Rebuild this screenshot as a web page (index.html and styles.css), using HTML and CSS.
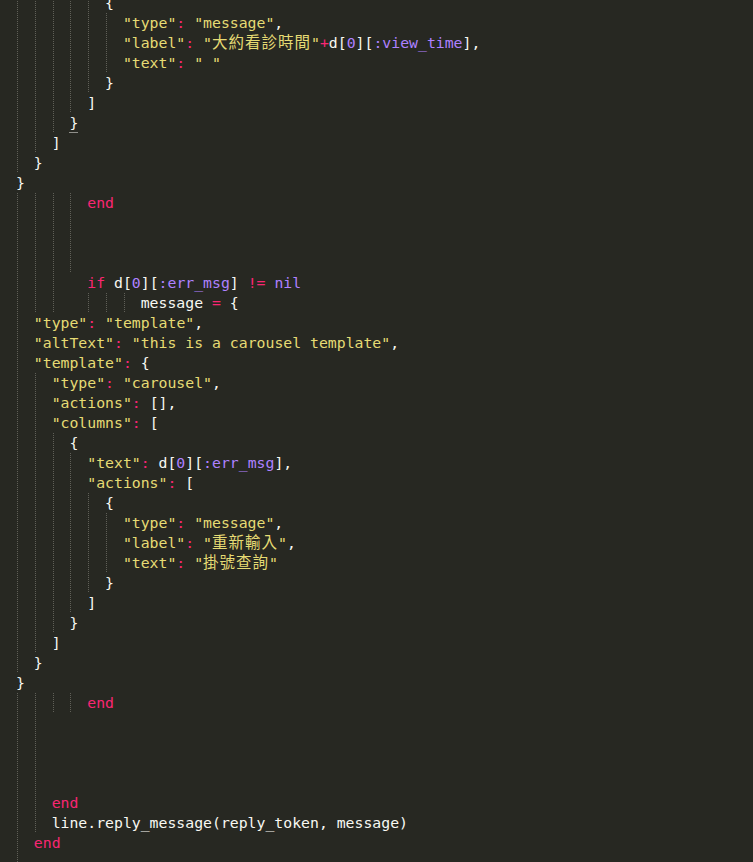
FILE: index.html
```html
<!DOCTYPE html>
<html>
	<head>
		<meta charset="utf-8">
		<title>reply.rb</title>
	<link rel="stylesheet" href="styles.css">
	</head>
	<body>
	<div class="editor">
		<div class="ln"><i class="g"></i><i class="g"></i><i class="g"></i><i class="g"></i><i class="g"></i><span class="t">{</span></div>
		<div class="ln"><i class="g"></i><i class="g"></i><i class="g"></i><i class="g"></i><i class="g"></i><i class="g"></i><span class="t"><b class="s">"type"</b><b class="k">:</b> <b class="s">"message"</b>,</span></div>
		<div class="ln"><i class="g"></i><i class="g"></i><i class="g"></i><i class="g"></i><i class="g"></i><i class="g"></i><span class="t"><b class="s">"label"</b><b class="k">:</b> <b class="s">"<b class="cjk">大約看診時間</b>"</b><b class="k">+</b>d[<b class="c">0</b>][<b class="c">:view_time</b>],</span></div>
		<div class="ln"><i class="g"></i><i class="g"></i><i class="g"></i><i class="g"></i><i class="g"></i><i class="g"></i><span class="t"><b class="s">"text"</b><b class="k">:</b> <b class="s">" "</b></span></div>
		<div class="ln"><i class="g"></i><i class="g"></i><i class="g"></i><i class="g"></i><i class="g"></i><span class="t">}</span></div>
		<div class="ln"><i class="g"></i><i class="g"></i><i class="g"></i><i class="g"></i><span class="t">]</span></div>
		<div class="ln"><i class="g"></i><i class="g"></i><i class="g"></i><span class="t"><b class="match">}</b></span></div>
		<div class="ln"><i class="g"></i><i class="g"></i><span class="t">]</span></div>
		<div class="ln"><i class="g"></i><span class="t">}</span></div>
		<div class="ln"><span class="t">}</span></div>
		<div class="ln"><i class="g"></i><i class="g"></i><i class="g"></i><i class="g"></i><span class="t"><b class="k">end</b></span></div>
		<div class="ln"><i class="g"></i><i class="g"></i><i class="g"></i><i class="g"></i></div>
		<div class="ln"><i class="g"></i><i class="g"></i><i class="g"></i><i class="g"></i></div>
		<div class="ln"><i class="g"></i><i class="g"></i><i class="g"></i><i class="g"></i></div>
		<div class="ln"><i class="g"></i><i class="g"></i><i class="g"></i><i class="e"></i><span class="t"><b class="k">if</b> d[<b class="c">0</b>][<b class="c">:err_msg</b>] <b class="k">!=</b> <b class="c">nil</b></span></div>
		<div class="ln"><i class="g"></i><i class="g"></i><i class="g"></i><i class="e"></i><i class="g"></i><i class="g"></i><i class="g"></i><span class="t">message <b class="k">=</b> {</span></div>
		<div class="ln"><i class="g"></i><span class="t"><b class="s">"type"</b><b class="k">:</b> <b class="s">"template"</b>,</span></div>
		<div class="ln"><i class="g"></i><span class="t"><b class="s">"altText"</b><b class="k">:</b> <b class="s">"this is a carousel template"</b>,</span></div>
		<div class="ln"><i class="g"></i><span class="t"><b class="s">"template"</b><b class="k">:</b> {</span></div>
		<div class="ln"><i class="g"></i><i class="g"></i><span class="t"><b class="s">"type"</b><b class="k">:</b> <b class="s">"carousel"</b>,</span></div>
		<div class="ln"><i class="g"></i><i class="g"></i><span class="t"><b class="s">"actions"</b><b class="k">:</b> [],</span></div>
		<div class="ln"><i class="g"></i><i class="g"></i><span class="t"><b class="s">"columns"</b><b class="k">:</b> [</span></div>
		<div class="ln"><i class="g"></i><i class="g"></i><i class="g"></i><span class="t">{</span></div>
		<div class="ln"><i class="g"></i><i class="g"></i><i class="g"></i><i class="g"></i><span class="t"><b class="s">"text"</b><b class="k">:</b> d[<b class="c">0</b>][<b class="c">:err_msg</b>],</span></div>
		<div class="ln"><i class="g"></i><i class="g"></i><i class="g"></i><i class="g"></i><span class="t"><b class="s">"actions"</b><b class="k">:</b> [</span></div>
		<div class="ln"><i class="g"></i><i class="g"></i><i class="g"></i><i class="g"></i><i class="g"></i><span class="t">{</span></div>
		<div class="ln"><i class="g"></i><i class="g"></i><i class="g"></i><i class="g"></i><i class="g"></i><i class="g"></i><span class="t"><b class="s">"type"</b><b class="k">:</b> <b class="s">"message"</b>,</span></div>
		<div class="ln"><i class="g"></i><i class="g"></i><i class="g"></i><i class="g"></i><i class="g"></i><i class="g"></i><span class="t"><b class="s">"label"</b><b class="k">:</b> <b class="s">"<b class="cjk">重新輸入</b>"</b>,</span></div>
		<div class="ln"><i class="g"></i><i class="g"></i><i class="g"></i><i class="g"></i><i class="g"></i><i class="g"></i><span class="t"><b class="s">"text"</b><b class="k">:</b> <b class="s">"<b class="cjk">掛號查詢</b>"</b></span></div>
		<div class="ln"><i class="g"></i><i class="g"></i><i class="g"></i><i class="g"></i><i class="g"></i><span class="t">}</span></div>
		<div class="ln"><i class="g"></i><i class="g"></i><i class="g"></i><i class="g"></i><span class="t">]</span></div>
		<div class="ln"><i class="g"></i><i class="g"></i><i class="g"></i><span class="t">}</span></div>
		<div class="ln"><i class="g"></i><i class="g"></i><span class="t">]</span></div>
		<div class="ln"><i class="g"></i><span class="t">}</span></div>
		<div class="ln"><span class="t">}</span></div>
		<div class="ln"><i class="g"></i><i class="g"></i><i class="g"></i><i class="g"></i><span class="t"><b class="k">end</b></span></div>
		<div class="ln"><i class="g"></i><i class="g"></i></div>
		<div class="ln"><i class="g"></i><i class="g"></i></div>
		<div class="ln"><i class="g"></i><i class="g"></i></div>
		<div class="ln"><i class="g"></i><i class="g"></i></div>
		<div class="ln"><i class="g"></i><i class="g"></i><span class="t"><b class="k">end</b></span></div>
		<div class="ln"><i class="g"></i><i class="g"></i><span class="t">line.reply_message(reply_token, message)</span></div>
		<div class="ln"><i class="g"></i><span class="t"><b class="k">end</b></span></div>
		<div class="ln"><i class="g"></i></div>
	</div>
	</body>
</html>
```
FILE: styles.css
```css
html,body{
	margin: 0;
	height: 100%;
	background-color: #272822;
	overflow: hidden;
}
.editor{
	margin-top: -7px;
	padding-left: 16px;
	font-family: "DejaVu Sans Mono", "Liberation Mono", monospace;
	font-size: 14.8px;
	color: #f8f8f2;
}
.ln{
	display: flex;
	height: 20px;
	line-height: 20px;
}
.t{
	white-space: pre;
}
b{
	font-weight: normal;
}
/* indent guide */
.g,.e{
	flex: none;
	width: 2ch;
	height: 20px;
}
.g{
	background: repeating-linear-gradient(to bottom, #606058 0 1px, transparent 1px 2px) 1px 0 / 1px 100% no-repeat;
}
.s{
	color: #e6db74;
}
.k{
	color: #f92672;
}
.c{
	color: #ae81ff;
}
.cjk{
	font-family: "Noto Sans CJK TC", sans-serif;
	font-size: 15.5px;
	line-height: 1;
	letter-spacing: 1px;
}
.match{
	display: inline-block;
	height: 20px;
	box-shadow: inset 0 -1px #8f8f8a;
}
```
